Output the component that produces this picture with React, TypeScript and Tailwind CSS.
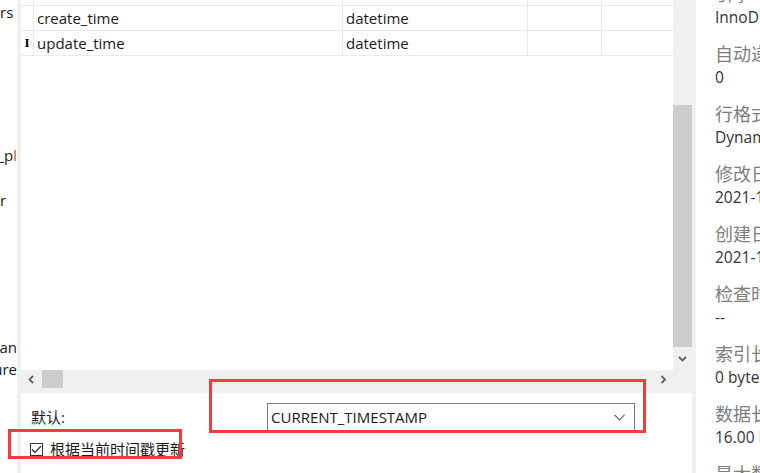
import React from 'react';

const font = "font-['Open_Sans','Noto_Sans_CJK_SC',sans-serif]";

const rows = [
  { name: '', type: '', marker: '' },
  { name: 'create_time', type: 'datetime', marker: '' },
  { name: 'update_time', type: 'datetime', marker: 'I' },
];

const props = [
  { label: '引擎', value: 'InnoDB' },
  { label: '自动递增', value: '0' },
  { label: '行格式', value: 'Dynamic' },
  { label: '修改日期', value: '2021-11-02 10:21:36' },
  { label: '创建日期', value: '2021-11-02 10:21:36' },
  { label: '检查时间', value: '--' },
  { label: '索引长度', value: '0 bytes (0)' },
  { label: '数据长度', value: '16.00 KB (16,384)' },
  { label: '最大数据长度', value: '0 bytes (0)' },
];

function Chevron({ dir, className }: { dir: 'left' | 'right' | 'down'; className?: string }) {
  const d =
    dir === 'left' ? 'M5 1 L1.5 4.5 L5 8' : dir === 'right' ? 'M1.5 1 L5 4.5 L1.5 8' : 'M1 2 L4.5 5.5 L8 2';
  return (
    <svg width={dir === 'down' ? 9 : 7} height={dir === 'down' ? 7 : 9} viewBox={dir === 'down' ? '0 0 9 7' : '0 0 7 9'} className={className}>
      <path d={d} fill="none" stroke="#606060" strokeWidth="1.8" />
    </svg>
  );
}

function LeftTree() {
  return (
    <div className="w-[17px] shrink-0 bg-white overflow-hidden text-[15px] text-[#1a1a1a] leading-[22px]">
      <div className="mt-[1px] whitespace-nowrap">rs</div>
      <div className="mt-[121px] flex justify-end whitespace-nowrap">
        <span>_p</span>
        <span className="text-[#c06010]">l</span>
      </div>
      <div className="mt-[23px] whitespace-nowrap">r</div>
      <div className="mt-[125px] flex justify-end whitespace-nowrap">an</div>
      <div className="flex justify-end whitespace-nowrap">ure</div>
    </div>
  );
}

function FieldTable() {
  return (
    <div className="flex-1 bg-white overflow-hidden">
      <div className="mt-[-19px]">
        {rows.map((r, i) => (
          <div key={i} className="flex h-[25px] text-[15px] text-[#1a1a1a] leading-[24px]">
            <div className="w-[13px] shrink-0 border-r border-b border-[#ebebeb] flex justify-center font-['Liberation_Serif',serif] font-bold text-[13px] text-black">
              {r.marker}
            </div>
            <div className="w-[309px] shrink-0 border-r border-b border-[#ebebeb] pl-[3px]">{r.name}</div>
            <div className="w-[185px] shrink-0 border-r border-b border-[#ebebeb] pl-[3px]">{r.type}</div>
            <div className="w-[74px] shrink-0 border-r border-b border-[#ebebeb]" />
            <div className="flex-1 border-b border-[#ebebeb]" />
          </div>
        ))}
      </div>
    </div>
  );
}

function VScroll() {
  return (
    <div className="w-[19px] shrink-0 bg-[#f0f0f0] flex flex-col">
      <div className="h-[105px]" />
      <div className="h-[242px] bg-[#cdcdcd]" />
      <div className="flex-1 flex items-center justify-center">
        <Chevron dir="down" />
      </div>
    </div>
  );
}

function HScroll() {
  return (
    <div className="h-[23px] bg-[#f0f0f0] flex flex-col">
      <div className="h-[18px] flex items-center">
        <div className="w-[21px] flex justify-center">
          <Chevron dir="left" />
        </div>
        <div className="w-[21px] h-[18px] bg-[#cdcdcd]" />
        <div className="flex-1" />
        <div className="w-[20px] flex justify-center">
          <Chevron dir="right" />
        </div>
        <div className="w-[19px]" />
      </div>
    </div>
  );
}

function BottomPane() {
  return (
    <div className="flex-1 bg-white pt-[10px] text-[15px] text-[#1a1a1a]">
      <div className="flex items-center h-[28px]">
        <div className="w-[246px] pl-[10px] leading-[20px]">默认:</div>
        <div className="w-[368px] h-[28px] border border-[#7a7a7a] flex items-center justify-between pl-[3px] pr-[9px]">
          <span>CURRENT_TIMESTAMP</span>
          <svg width="11" height="7" viewBox="0 0 11 7">
            <path d="M0.5 0.8 L5.5 5.8 L10.5 0.8" fill="none" stroke="#555" strokeWidth="1.1" />
          </svg>
        </div>
      </div>
      <div className="mt-[7px] h-[22px] flex items-center pl-[9px]">
        <div className="w-[13px] h-[13px] border border-[#333] bg-white flex items-center justify-center">
          <svg width="11" height="9" viewBox="0 0 11 9">
            <path d="M1 4.5 L4 7.5 L10 1.2" fill="none" stroke="#222" strokeWidth="1.2" />
          </svg>
        </div>
        <span className="ml-[7px] whitespace-nowrap leading-[20px]">根据当前时间戳更新</span>
      </div>
    </div>
  );
}

function InfoPanel() {
  return (
    <div className="flex-1 bg-white overflow-hidden pl-[19px]">
      <div className="mt-[-18px] flex flex-col gap-[14px]">
        {props.map((p) => (
          <div key={p.label} className="whitespace-nowrap">
            <div className="h-[24px] leading-[24px] text-[18px] text-[#7d7d7d]">{p.label}</div>
            <div className="h-[22px] leading-[22px] text-[15.5px] text-[#333]">{p.value}</div>
          </div>
        ))}
      </div>
    </div>
  );
}

export default function App() {
  return (
    <div className={`relative w-[760px] h-[473px] overflow-hidden flex bg-white ${font}`}>
      <LeftTree />
      <div className="w-[4px] shrink-0 bg-[#f0f0f0]" />
      <div className="w-[671px] shrink-0 flex flex-col">
        <div className="h-[370px] flex">
          <FieldTable />
          <VScroll />
        </div>
        <HScroll />
        <BottomPane />
      </div>
      <div className="w-[4px] shrink-0 bg-[#f0f0f0]" />
      <InfoPanel />

      {/* annotation boxes */}
      <div className="absolute left-[209px] top-[379px] w-[437px] h-[54px] border-[3px] border-[#f23d3d]" />
      <div className="absolute left-[8px] top-[429px] w-[174px] h-[30px] border-[3px] border-[#f23d3d]" />
    </div>
  );
}
